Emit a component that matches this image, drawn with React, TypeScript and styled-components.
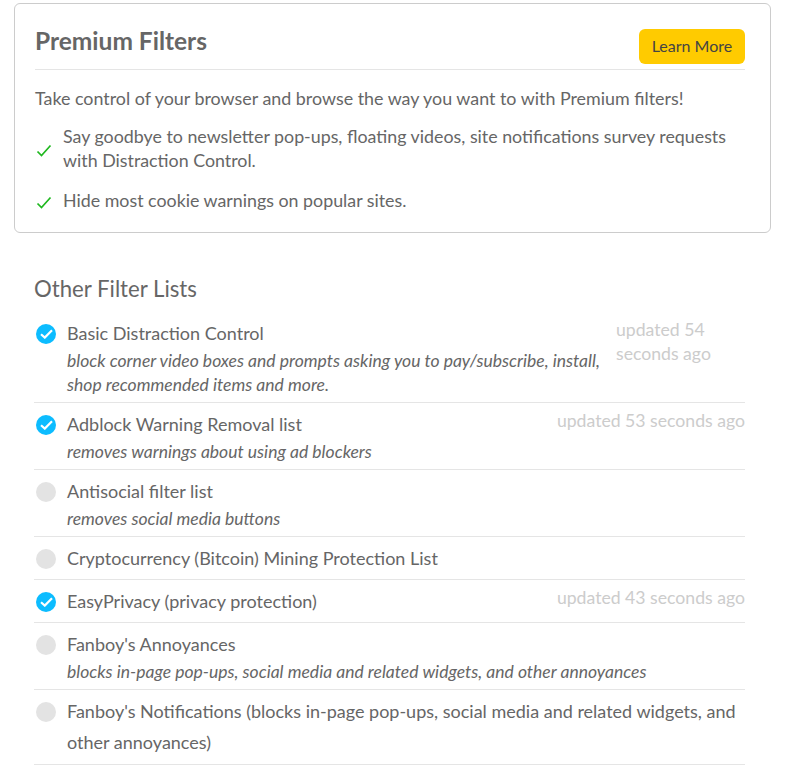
import React from "react";
import styled, { createGlobalStyle } from "styled-components";

const GlobalStyle = createGlobalStyle`
  html, body {
    margin: 0;
    padding: 0;
    background: #fff;
    overflow: hidden;
  }
  body {
    font-family: Lato, "Open Sans", sans-serif;
    color: #666;
  }
`;

const Page = styled.div`
  width: 787px;
  height: 770px;
  padding: 3px 16px 0 14px;
  box-sizing: border-box;
  overflow: hidden;
`;

const PremiumCard = styled.section`
  border: 1px solid #ccc;
  border-radius: 6px;
  padding: 25px 25px 17px 20px;
  height: 230px;
  box-sizing: border-box;
`;

const CardHeader = styled.header`
  display: flex;
  justify-content: space-between;
  align-items: flex-start;
  border-bottom: 1px solid #e5e5e5;
  height: 40px;
`;

const CardTitle = styled.h2`
  margin: -4px 0 0;
  font-size: 24.5px;
  line-height: 32px;
  font-weight: 700;
  color: #666;
`;

const LearnMore = styled.button`
  border: 0;
  background: #ffcb00;
  color: #444;
  border-radius: 6px;
  width: 106px;
  height: 35px;
  padding: 0 0 2px;
  font-family: inherit;
  font-size: 16px;
`;

const Intro = styled.p`
  margin: 16px 0 0;
  font-size: 17.88px;
  line-height: 24px;
`;

const PerkList = styled.ul`
  list-style: none;
  margin: 14px 0 0;
  padding: 0;
  display: flex;
  flex-direction: column;
  gap: 16px;
`;

const Perk = styled.li`
  display: flex;
  align-items: center;
  font-size: 17.82px;
  line-height: 24px;
`;

const PerkCheck = styled.svg`
  flex: none;
  width: 16px;
  height: 14px;
  margin: 5px 11px 0 1px;
`;

const FilterSection = styled.section`
  margin: 39px 0 0 20px;
  width: 711px;
`;

const SectionTitle = styled.h3`
  margin: 0 0 7px;
  font-size: 22.2px;
  line-height: 33px;
  font-weight: 400;
  color: #666;
`;

const FilterRow = styled.div`
  display: flex;
  align-items: flex-start;
  padding: 5.5px 0 5px;
  border-bottom: 1px solid #e5e5e5;
`;

const Toggle = styled.span<{ $on: boolean }>`
  flex: none;
  width: 20px;
  height: 20px;
  margin: 6px 11px 0 2px;
  border-radius: 50%;
  background: ${(p) => (p.$on ? "#0cbcff" : "#e3e3e3")};
  display: flex;
  align-items: center;
  justify-content: center;
`;

const FilterBody = styled.div`
  flex: 1 1 0;
  min-width: 0;
`;

const FilterName = styled.div`
  font-size: 18px;
  line-height: 31.5px;
`;

const FilterDesc = styled.div`
  font-size: 17.55px;
  line-height: 24px;
  font-style: italic;
  padding-top: 0.25px;
  margin-bottom: -0.25px;
`;

const Updated = styled.div<{ $narrow?: boolean }>`
  flex: none;
  width: ${(p) => (p.$narrow ? "129px" : "auto")};
  margin-left: 15px;
  margin-top: 0.5px;
  font-size: 17.65px;
  line-height: 24px;
  color: #ccc;
`;

type Filter = {
  name: string;
  desc?: string;
  on?: boolean;
  updated?: string;
  narrow?: boolean;
};

const filters: Filter[] = [
  {
    name: "Basic Distraction Control",
    desc: "block corner video boxes and prompts asking you to pay/subscribe, install, shop recommended items and more.",
    on: true,
    updated: "updated 54 seconds ago",
    narrow: true,
  },
  {
    name: "Adblock Warning Removal list",
    desc: "removes warnings about using ad blockers",
    on: true,
    updated: "updated 53 seconds ago",
  },
  { name: "Antisocial filter list", desc: "removes social media buttons" },
  { name: "Cryptocurrency (Bitcoin) Mining Protection List" },
  {
    name: "EasyPrivacy (privacy protection)",
    on: true,
    updated: "updated 43 seconds ago",
  },
  {
    name: "Fanboy's Annoyances",
    desc: "blocks in-page pop-ups, social media and related widgets, and other annoyances",
  },
  {
    name: "Fanboy's Notifications (blocks in-page pop-ups, social media and related widgets, and other annoyances)",
  },
];

function GreenCheck() {
  return (
    <PerkCheck viewBox="0 0 16 14" fill="none">
      <path d="M1.5 7.5 L5.5 11.5 L14.5 1.5" stroke="#1fb81f" strokeWidth="1.7" />
    </PerkCheck>
  );
}

function WhiteCheck() {
  return (
    <svg width="13" height="10" viewBox="0 0 13 10" fill="none">
      <path d="M1 5.2 L4.8 8.6 L12 1.2" stroke="#fff" strokeWidth="2.2" />
    </svg>
  );
}

export default function App() {
  return (
    <Page>
      <GlobalStyle />
      <PremiumCard>
        <CardHeader>
          <CardTitle>Premium Filters</CardTitle>
          <LearnMore>Learn More</LearnMore>
        </CardHeader>
        <Intro>Take control of your browser and browse the way you want to with Premium filters!</Intro>
        <PerkList>
          <Perk>
            <GreenCheck />
            <span>
              Say goodbye to newsletter pop-ups, floating videos, site notifications survey requests with
              Distraction Control.
            </span>
          </Perk>
          <Perk>
            <GreenCheck />
            <span>Hide most cookie warnings on popular sites.</span>
          </Perk>
        </PerkList>
      </PremiumCard>
      <FilterSection>
        <SectionTitle>Other Filter Lists</SectionTitle>
        {filters.map((f) => (
          <FilterRow key={f.name}>
            <Toggle $on={!!f.on}>{f.on && <WhiteCheck />}</Toggle>
            <FilterBody>
              <FilterName>{f.name}</FilterName>
              {f.desc && <FilterDesc>{f.desc}</FilterDesc>}
            </FilterBody>
            {f.updated && <Updated $narrow={f.narrow}>{f.updated}</Updated>}
          </FilterRow>
        ))}
      </FilterSection>
    </Page>
  );
}
